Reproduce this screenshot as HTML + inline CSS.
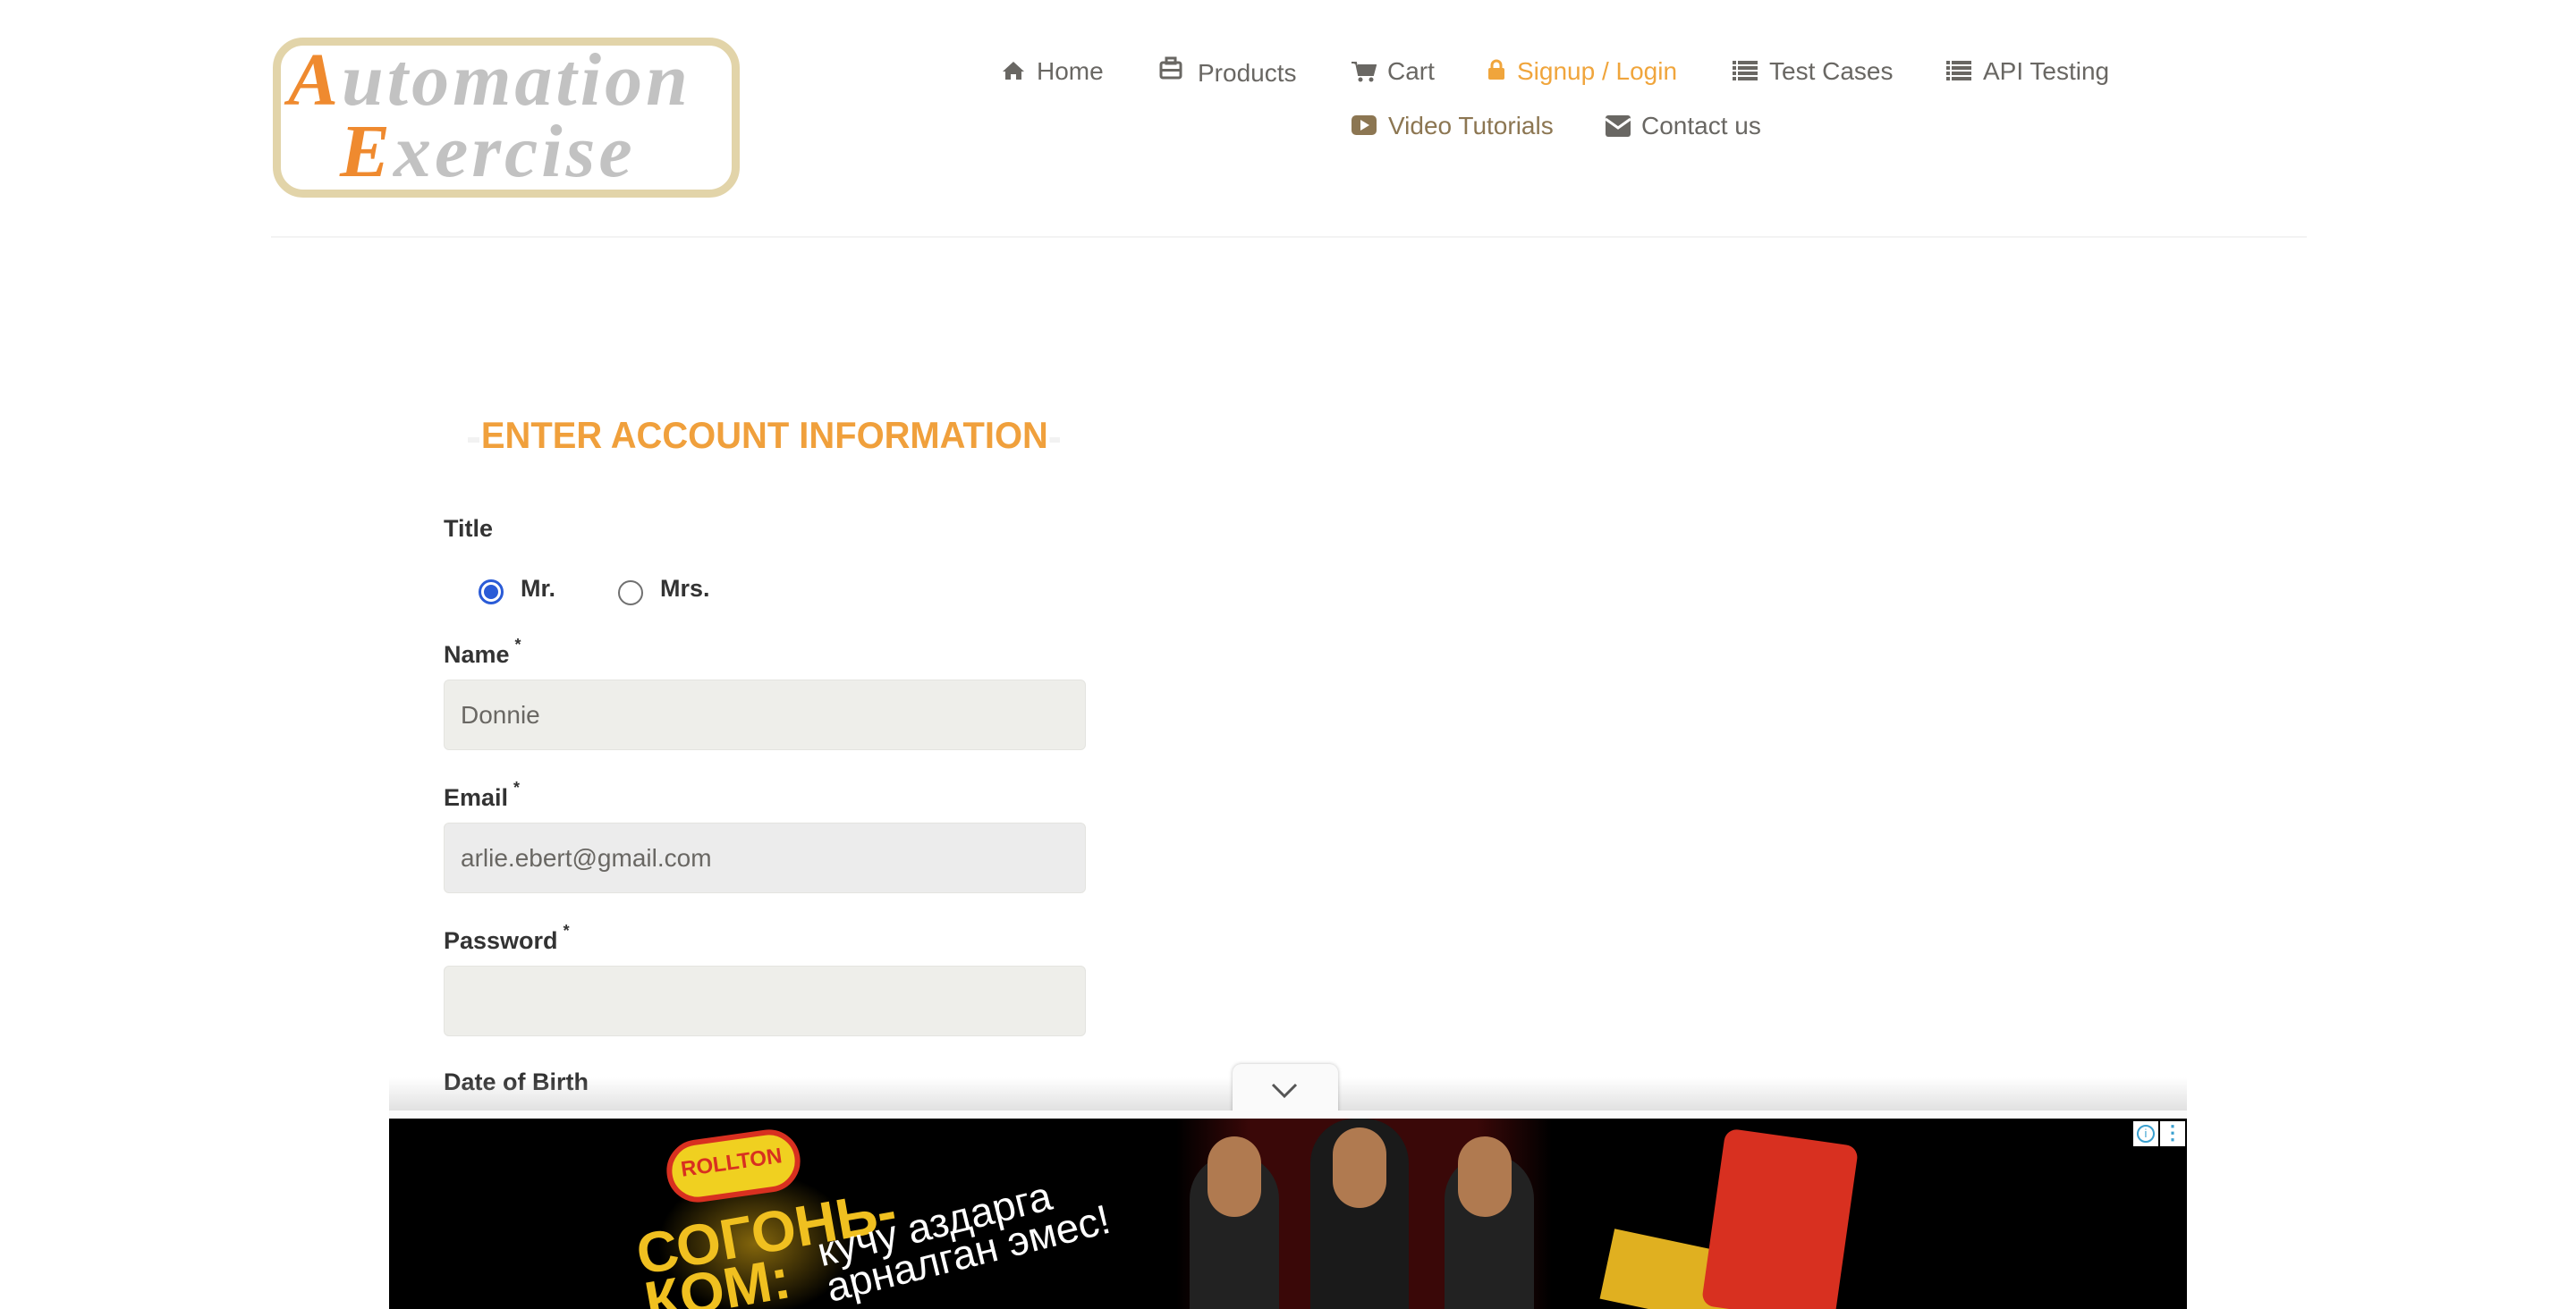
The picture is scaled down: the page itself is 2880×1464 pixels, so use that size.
<!DOCTYPE html>
<html><head><meta charset="utf-8">
<style>
*{margin:0;padding:0;box-sizing:border-box}
body{width:2880px;height:1464px;overflow:hidden;background:#fff;font-family:"Liberation Sans",Arial,sans-serif;position:relative}
.a{position:absolute;white-space:nowrap}
.nav{font-size:28px;color:#696763;line-height:1}
.nav svg{position:absolute}
.lbl{font-size:27px;font-weight:bold;color:#333}
.lbl sup{font-size:18px;position:relative;top:-4px;margin-left:6px}
.inp{position:absolute;left:496px;width:718px;height:79px;background:#eeeeea;border-radius:6px;border:1px solid #e4e4e0;font-size:28px;color:#696763;padding:0 18px;line-height:77px}
</style></head><body>

<!-- logo -->
<div class="a" style="left:305px;top:42px;width:522px;height:179px;border:9px solid #e2d4a9;border-radius:34px;background:#fff"></div>
<div class="a" style="left:322px;top:48px;font-family:'Liberation Serif',serif;font-style:italic;font-weight:bold;font-size:84px;color:#c2c2c2;letter-spacing:4px;line-height:1"><span style="color:#ef8a2f">A</span>utomation</div>
<div class="a" style="left:380px;top:128px;font-family:'Liberation Serif',serif;font-style:italic;font-weight:bold;font-size:84px;color:#c2c2c2;letter-spacing:4px;line-height:1"><span style="color:#ef8a2f">E</span>xercise</div>

<!-- nav -->
<div class="nav">
<svg style="left:1120px;top:68px" width="26" height="22" viewBox="0 0 26 22"><path d="M13 1 L1 12 L4 12 L4 21 L10 21 L10 15 L16 15 L16 21 L22 21 L22 12 L25 12 Z" fill="#696763"/></svg>
<div class="a" style="left:1159px;top:66px">Home</div>
<svg style="left:1296px;top:63px" width="26" height="26" viewBox="0 0 26 26"><rect x="2" y="7" width="22" height="17" rx="2" fill="none" stroke="#696763" stroke-width="3"/><rect x="8" y="2" width="10" height="6" fill="none" stroke="#696763" stroke-width="3"/><rect x="2" y="14" width="22" height="3" fill="#696763"/></svg>
<div class="a" style="left:1339px;top:68px">Products</div>
<svg style="left:1511px;top:68px" width="28" height="24" viewBox="0 0 28 24"><path d="M0 2 L5 2 L8 16 L24 16 L27 5 L7 5" fill="#696763" stroke="#696763" stroke-width="2"/><circle cx="10" cy="21" r="2.5" fill="#696763"/><circle cx="22" cy="21" r="2.5" fill="#696763"/></svg>
<div class="a" style="left:1551px;top:66px">Cart</div>
<svg style="left:1663px;top:66px" width="20" height="24" viewBox="0 0 20 24"><path d="M5 11 V7 a5 5 0 0 1 10 0 V11" fill="none" stroke="#f0a53c" stroke-width="3"/><rect x="1" y="10" width="18" height="13" rx="2" fill="#f0a53c"/></svg>
<div class="a" style="left:1696px;top:66px;color:#f0a53c">Signup / Login</div>
<svg style="left:1937px;top:68px" width="28" height="22" viewBox="0 0 28 22"><g fill="#696763"><rect x="0" y="0" width="4" height="4"/><rect x="6" y="0" width="22" height="4"/><rect x="0" y="6" width="4" height="4"/><rect x="6" y="6" width="22" height="4"/><rect x="0" y="12" width="4" height="4"/><rect x="6" y="12" width="22" height="4"/><rect x="0" y="18" width="4" height="4"/><rect x="6" y="18" width="22" height="4"/></g></svg>
<div class="a" style="left:1978px;top:66px">Test Cases</div>
<svg style="left:2176px;top:68px" width="28" height="22" viewBox="0 0 28 22"><g fill="#696763"><rect x="0" y="0" width="4" height="4"/><rect x="6" y="0" width="22" height="4"/><rect x="0" y="6" width="4" height="4"/><rect x="6" y="6" width="22" height="4"/><rect x="0" y="12" width="4" height="4"/><rect x="6" y="12" width="22" height="4"/><rect x="0" y="18" width="4" height="4"/><rect x="6" y="18" width="22" height="4"/></g></svg>
<div class="a" style="left:2217px;top:66px">API Testing</div>
<svg style="left:1511px;top:128px" width="28" height="24" viewBox="0 0 28 24"><rect x="0" y="1" width="28" height="22" rx="5" fill="#8c7652"/><path d="M10 6 L20 12 L10 18 Z" fill="#fff"/></svg>
<div class="a" style="left:1552px;top:127px;color:#8c7652">Video Tutorials</div>
<svg style="left:1795px;top:129px" width="28" height="24" viewBox="0 0 28 24"><rect x="0" y="0" width="28" height="24" rx="3" fill="#696763"/><path d="M0 4 L14 14 L28 4" fill="none" stroke="#fff" stroke-width="3"/></svg>
<div class="a" style="left:1835px;top:127px">Contact us</div>
</div>

<div class="a" style="left:303px;top:264px;width:2276px;height:2px;background:#f3f3f3"></div>

<!-- heading -->
<div class="a" style="left:523px;top:489px;width:662px;height:6px;background:#f2f2f2"></div>
<div class="a" style="left:536px;top:466px;font-size:42px;font-weight:bold;color:#f0a03c;line-height:1;background:#fff;padding:0 2px;transform:scaleX(0.95);transform-origin:left">ENTER ACCOUNT INFORMATION</div>

<div class="a lbl" style="left:496px;top:576px">Title</div>
<div class="a" style="left:535px;top:648px;width:28px;height:28px;border:3px solid #2a5bd7;border-radius:50%"></div>
<div class="a" style="left:541px;top:654px;width:16px;height:16px;background:#2a5bd7;border-radius:50%"></div>
<div class="a lbl" style="left:582px;top:643px">Mr.</div>
<div class="a" style="left:691px;top:649px;width:28px;height:28px;border:2px solid #707070;border-radius:50%"></div>
<div class="a lbl" style="left:738px;top:643px">Mrs.</div>

<div class="a lbl" style="left:496px;top:715px">Name<sup>*</sup></div>
<div class="inp" style="top:760px">Donnie</div>
<div class="a lbl" style="left:496px;top:875px">Email<sup>*</sup></div>
<div class="inp" style="top:920px;background:#ececec">arlie.ebert@gmail.com</div>
<div class="a lbl" style="left:496px;top:1035px">Password<sup>*</sup></div>
<div class="inp" style="top:1080px"></div>
<div class="a lbl" style="left:496px;top:1195px">Date of Birth</div>

<!-- ad -->
<div class="a" style="left:435px;top:1205px;width:2010px;height:40px;background:linear-gradient(to bottom,rgba(255,255,255,0),rgba(190,190,190,.5))"></div>
<div class="a" style="left:1378px;top:1190px;width:118px;height:60px;background:#fafafa;border-radius:10px 10px 0 0;box-shadow:0 0 4px rgba(0,0,0,.25)"></div>
<svg class="a" style="left:1420px;top:1210px" width="32" height="20" viewBox="0 0 32 20"><path d="M3 3 L16 16 L29 3" fill="none" stroke="#555" stroke-width="3"/></svg>
<div class="a" style="left:435px;top:1242px;width:2010px;height:10px;background:#fafafa"></div>
<div class="a" style="left:435px;top:1251px;width:2010px;height:213px;background:#000;overflow:hidden">
  <div class="a" style="left:300px;top:60px;width:220px;height:160px;background:radial-gradient(ellipse,rgba(220,170,20,.6),rgba(0,0,0,0) 70%)"></div>
  <div class="a" style="left:310px;top:18px;width:150px;height:70px;background:#f0d020;border:6px solid #d83020;border-radius:40px;transform:rotate(-8deg)"></div>
  <div class="a" style="left:326px;top:36px;font-size:24px;font-weight:bold;color:#d83020;transform:rotate(-8deg)">ROLLTON</div>
  <div class="a" style="left:280px;top:100px;font-size:64px;font-weight:bold;color:#f0c020;transform:rotate(-10deg);line-height:.85">СОГОНЬ-<br>КОМ:</div>
  <div class="a" style="left:480px;top:90px;font-size:46px;color:#fff;transform:rotate(-14deg);line-height:.9">кучу аздарга<br>арналган эмес!</div>
  <div class="a" style="left:880px;top:0;width:420px;height:213px;background:linear-gradient(to right,#000,#3a0808 20%,#3a0808 80%,#000)"></div>
  <div class="a" style="left:895px;top:40px;width:100px;height:180px;background:#222;border-radius:50px 50px 0 0"></div>
  <div class="a" style="left:915px;top:20px;width:60px;height:90px;background:#b07a50;border-radius:30px"></div>
  <div class="a" style="left:1030px;top:0;width:110px;height:213px;background:#1a1a1a;border-radius:50px 50px 0 0"></div>
  <div class="a" style="left:1055px;top:10px;width:60px;height:90px;background:#b07a50;border-radius:30px"></div>
  <div class="a" style="left:1180px;top:40px;width:100px;height:180px;background:#222;border-radius:50px 50px 0 0"></div>
  <div class="a" style="left:1195px;top:20px;width:60px;height:90px;background:#b07a50;border-radius:30px"></div>
  <div class="a" style="left:1360px;top:140px;width:170px;height:80px;background:#e0b020;transform:rotate(12deg)"></div>
  <div class="a" style="left:1480px;top:20px;width:150px;height:200px;background:#d83020;border-radius:14px;transform:rotate(8deg)"></div>
  <div class="a" style="left:1950px;top:3px;width:28px;height:28px;background:#fff"></div>
  <div class="a" style="left:1954px;top:7px;width:20px;height:20px;border:2px solid #3aa0d0;border-radius:50%;font-size:13px;color:#3aa0d0;text-align:center;line-height:16px">i</div>
  <div class="a" style="left:1980px;top:3px;width:28px;height:28px;background:#fff;font-size:22px;color:#3aa0d0;text-align:center;line-height:26px;font-weight:bold">⋮</div>
</div>
</body></html>
